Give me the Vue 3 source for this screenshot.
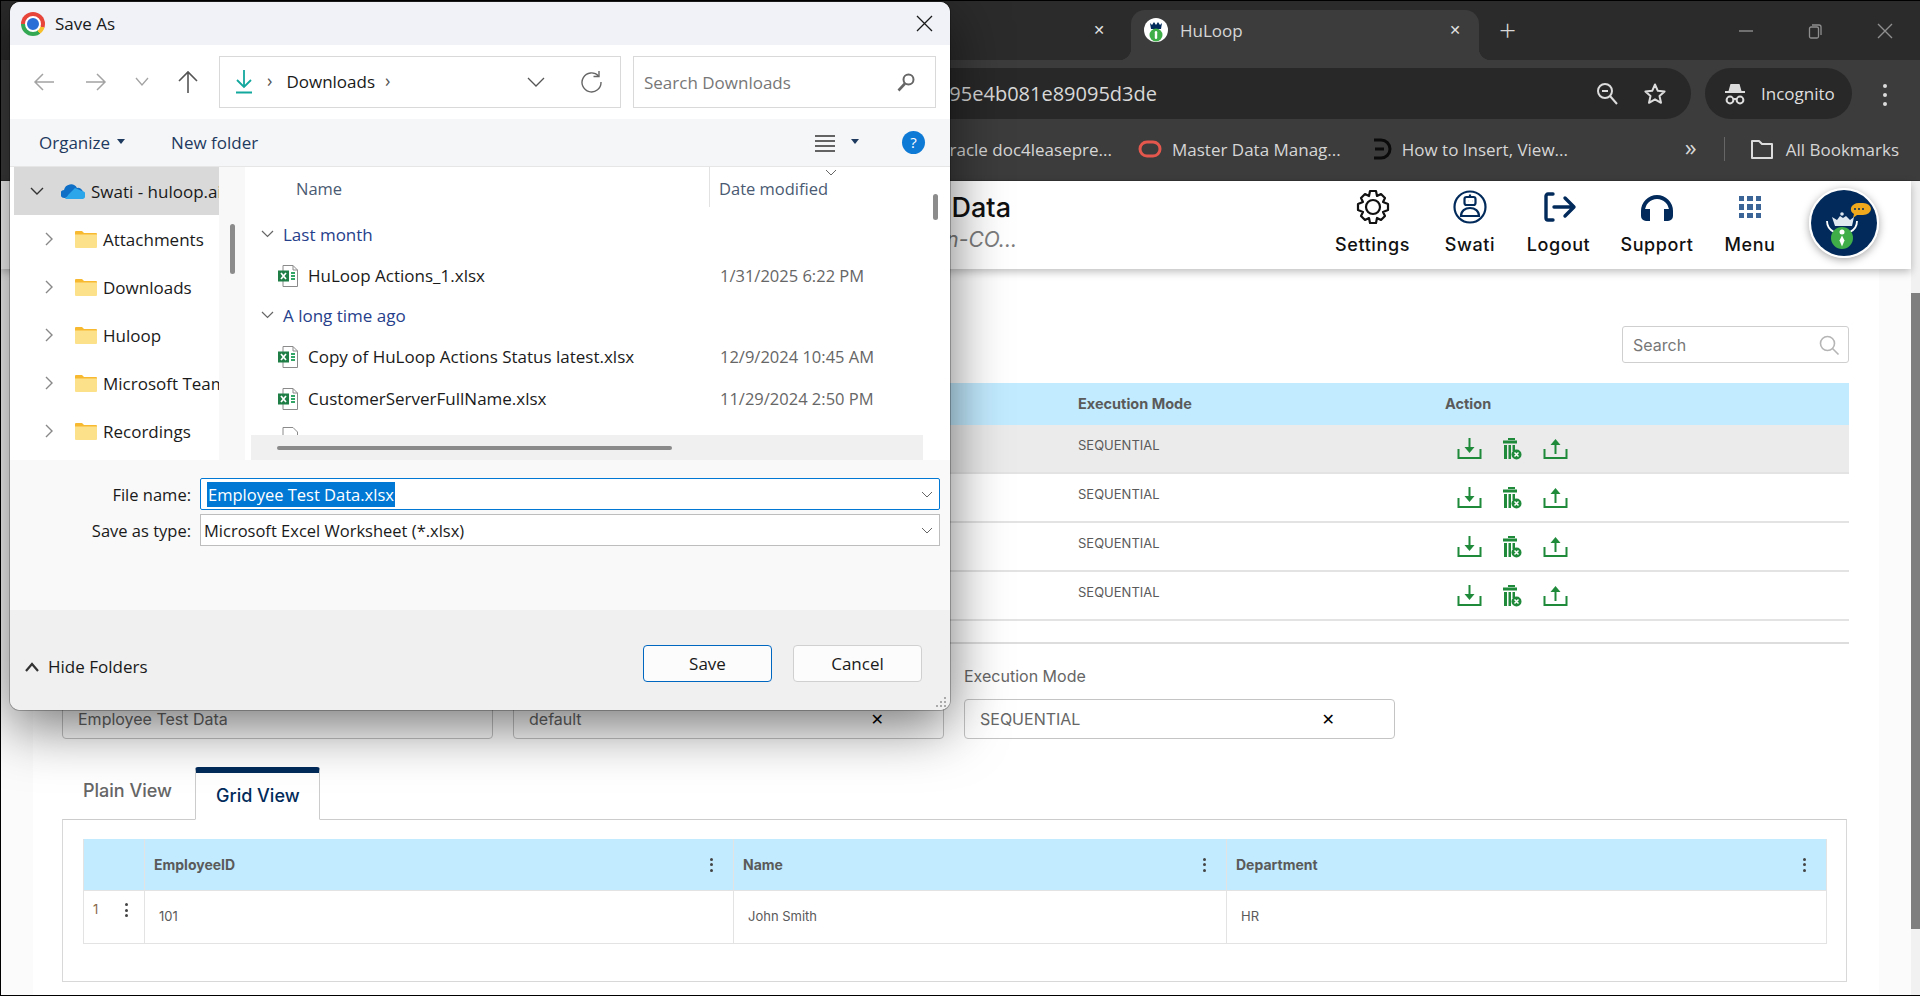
<template>
  <div class="screen">
    <!-- browser chrome -->
    <div class="tabstrip">
      <div class="tab-other"><span class="tab-x">✕</span></div>
      <div class="tab-active">
        <svg class="favicon" viewBox="0 0 24 24">
          <circle cx="12" cy="12" r="12" fill="#fff" />
          <path d="M6 5l2 2 2-3 2 3 2-3 2 3 2-2-1 6H7z" fill="#022b5b" />
          <circle cx="12" cy="17" r="6.5" fill="#3fae49" />
          <rect x="10.8" y="13" width="2.4" height="8" rx="1.2" fill="#fff" />
        </svg>
        <span class="tab-title">HuLoop</span>
        <span class="tab-x tab-x-active">✕</span>
      </div>
      <span class="tab-plus">+</span>
      <div class="win-controls">
        <svg width="16" height="16" viewBox="0 0 16 16"><path d="M1 8h14" stroke="#8f8f8f" stroke-width="1.4" /></svg>
        <svg width="16" height="16" viewBox="0 0 16 16" fill="none" stroke="#8f8f8f" stroke-width="1.3"><rect x="2.5" y="4" width="9" height="11" rx="1.5" /><path d="M5 2h7a2 2 0 0 1 2 2v8" /></svg>
        <svg width="18" height="18" viewBox="0 0 18 18"><path d="M2 2l14 14M16 2L2 16" stroke="#8f8f8f" stroke-width="1.4" /></svg>
      </div>
    </div>
    <div class="toolbar">
      <div class="addressbar">
        <span class="url">95e4b081e89095d3de</span>
        <svg class="addr-icon" width="24" height="26" viewBox="0 0 24 26" fill="none" stroke="#dcdcdc" stroke-width="2"><circle cx="10" cy="10" r="7" /><path d="M15 15l7 8M7 10h6" /></svg>
        <svg class="addr-icon star" width="24" height="24" viewBox="0 0 24 24" fill="none" stroke="#dcdcdc" stroke-width="2" stroke-linejoin="round"><path d="M12 2.5l2.8 6.3 6.8.7-5.1 4.500 1.500 6.800-6-3.500-6 3.500 1.500-6.800-5.100-4.500 6.800-.7z" /></svg>
      </div>
      <div class="incognito">
        <svg width="24" height="24" viewBox="0 0 24 24" fill="#dcdcdc"><path d="M7.5 2h9l2 7H22v2H2V9h3.500z" /><circle cx="7" cy="18" r="3.400" fill="none" stroke="#dcdcdc" stroke-width="2" /><circle cx="17" cy="18" r="3.400" fill="none" stroke="#dcdcdc" stroke-width="2" /><path d="M10 17h4" stroke="#dcdcdc" stroke-width="2" /></svg>
        <span>Incognito</span>
      </div>
      <div class="kebab-light"><i></i><i></i><i></i></div>
    </div>
    <div class="bookmarks">
      <span class="bm bm-first">racle doc4leasepre...</span>
      <svg class="bm-icon" width="24" height="20" viewBox="0 0 24 20"><rect x="2" y="3" width="20" height="14" rx="7" fill="none" stroke="#e4574c" stroke-width="3" /></svg>
      <span class="bm">Master Data Manag...</span>
      <svg class="bm-icon bm-icon-d" width="20" height="24" viewBox="0 0 20 24" fill="none" stroke="#0b0b0b" stroke-width="3"><path d="M2 3h7a9 9 0 0 1 0 18H2M3 12h9" /></svg>
      <span class="bm">How to Insert, View...</span>
      <span class="bm-more">»</span>
      <span class="bm-sep"></span>
      <svg width="24" height="22" viewBox="0 0 24 22" fill="none" stroke="#dcdcdc" stroke-width="2" stroke-linejoin="round"><path d="M2 3h7l3 3h10v14H2z" /></svg>
      <span class="bm bm-all">All Bookmarks</span>
    </div>

    <!-- page behind the dialog -->
    <div class="viewport">
      <div class="content">
        <header class="app-header">
          <div class="page-title">
            <div class="title-main">Data</div>
            <div class="title-sub">n-CO...</div>
          </div>
          <div class="nav-items">
            <div class="nav-item">
              <svg width="36" height="36" viewBox="0 0 36 36" fill="none" stroke="#111" stroke-width="2.200" stroke-linejoin="round"><path d="M15 2h6l1 5 4-2 4 4-2 4 5 2v6l-5 2 2 4-4 4-4-2-1 5h-6l-1-5-4 2-4-4 2-4-5-2v-6l5-2-2-4 4-4 4 2z" /><circle cx="18" cy="18" r="7" /></svg>
              <span>Settings</span>
            </div>
            <div class="nav-item">
              <svg width="36" height="36" viewBox="0 0 36 36" fill="none" stroke="#022b5b" stroke-width="2.200"><circle cx="18" cy="18" r="15.500" /><rect x="12.500" y="8" width="11" height="8" rx="2" /><path d="M18 5.500V8M16 12h.1M20 12h.1" /><path d="M9 27c0-5 4-8 9-8s9 3 9 8z" /></svg>
              <span>Swati</span>
            </div>
            <div class="nav-item">
              <svg width="36" height="36" viewBox="0 0 36 36" fill="none" stroke="#022b5b" stroke-width="3.400" stroke-linecap="round" stroke-linejoin="round"><path d="M12 5H7a2 2 0 0 0-2 2v22a2 2 0 0 0 2 2h5" /><path d="M13 18h19M24 9l9 9-9 9" /></svg>
              <span>Logout</span>
            </div>
            <div class="nav-item">
              <svg width="36" height="36" viewBox="0 0 36 36"><path d="M2 22a16 16 0 0 1 32 0v1h-4v-1a12 12 0 0 0-24 0v1H2z" fill="#022b5b" /><path d="M2 23a5 5 0 0 1 5-3h4v12H7a5 5 0 0 1-5-5zM34 23a5 5 0 0 0-5-3h-4v12h4a5 5 0 0 0 5-5z" fill="#022b5b" /></svg>
              <span>Support</span>
            </div>
            <div class="nav-item">
              <div class="grid-icon"><i v-for="n in 9" :key="n"></i></div>
              <span>Menu</span>
            </div>
            <div class="avatar">
              <svg width="66" height="66" viewBox="0 0 66 66">
                <circle cx="33" cy="33" r="33" fill="#022b5b" />
                <path d="M40 18a8 6 0 0 1 8-5h4a8 6 0 0 1 0 12h-6l-4 3 1-4a7 6 0 0 1-3-6z" fill="#f0a91d" />
                <g fill="#022b5b"><circle cx="44" cy="19" r="1" /><circle cx="48" cy="19" r="1" /><circle cx="52" cy="19" r="1" /></g>
                <path d="M21 27l5 3 3-4 3 2 3-2 4 4 4-3-2 9H24z" fill="#dfe7f1" />
                <circle cx="31" cy="24" r="1.800" fill="#dfe7f1" />
                <path d="M16 31c0 6 3 9 7 11M46 31c0 6-3 9-7 11" fill="none" stroke="#fff" stroke-width="1.800" />
                <circle cx="31" cy="48" r="11" fill="#3fae49" />
                <circle cx="31" cy="42" r="2.500" fill="#fff" />
                <path d="M31 45.500l2.500 5-2.500 6-2.500-6z" fill="#fff" />
              </svg>
            </div>
          </div>
        </header>

        <main class="main">
          <div class="search-row">
            <div class="page-search">
              <span>Search</span>
              <svg width="22" height="22" viewBox="0 0 22 22" fill="none" stroke="#b5b5b5" stroke-width="1.600"><circle cx="9.500" cy="9.500" r="7" /><path d="M14.500 14.500l6 6" /></svg>
            </div>
          </div>

          <div class="list-table">
            <div class="list-row list-head">
              <div></div>
              <div>Execution Mode</div>
              <div>Action</div>
            </div>
            <div v-for="n in 4" :key="n" class="list-row" :class="{ 'is-hover': n === 1 }">
              <div></div>
              <div>SEQUENTIAL</div>
              <div class="actions">
                <svg width="25" height="22" viewBox="0 0 25 22" fill="none" stroke="#1f8a3a" stroke-width="2"><path d="M1.500 11v9h22v-9" /><path d="M12.500 0v11" /><path d="M7.500 9h10l-5 6z" fill="#1f8a3a" stroke="none" /></svg>
                <svg width="19" height="22" viewBox="0 0 19 22" fill="#1f8a3a"><rect x="5" y="0" width="7" height="2" /><rect x="0" y="2.500" width="14" height="3" /><rect x="1" y="7" width="3" height="14" /><rect x="5.500" y="7" width="2.500" height="14" /><rect x="9.500" y="7" width="2.500" height="6" /><circle cx="13.500" cy="16.500" r="5" /><path d="M11.500 14.500l4 4M15.500 14.500l-4 4" stroke="#fff" stroke-width="1.500" /></svg>
                <svg width="25" height="22" viewBox="0 0 25 22" fill="none" stroke="#1f8a3a" stroke-width="2"><path d="M1.500 11v9h22v-9" /><path d="M12.500 16V4" /><path d="M7.500 7h10l-5-6z" fill="#1f8a3a" stroke="none" /></svg>
              </div>
            </div>
          </div>

          <hr class="divider" />

          <div class="fields">
            <div class="field">
              <label>&nbsp;</label>
              <div class="input">Employee Test Data</div>
            </div>
            <div class="field">
              <label>&nbsp;</label>
              <div class="input">default<b class="clear">✕</b></div>
            </div>
            <div class="field">
              <label>Execution Mode</label>
              <div class="input">SEQUENTIAL<b class="clear">✕</b></div>
            </div>
          </div>

          <div class="view-tabs">
            <span class="view-tab">Plain View</span>
            <span class="view-tab is-active">Grid View</span>
          </div>
          <div class="grid-box">
            <div class="grid-table">
              <div class="grid-head">
                <div class="cell"></div>
                <div v-for="col in columns" :key="col" class="cell">
                  {{ col }}
                  <span class="dots"><i></i><i></i><i></i></span>
                </div>
              </div>
              <div class="grid-body">
                <div class="cell row-no">1<span class="dots"><i></i><i></i><i></i></span></div>
                <div class="cell">101</div>
                <div class="cell">John Smith</div>
                <div class="cell">HR</div>
              </div>
            </div>
          </div>
        </main>
      </div>
      <div class="scrollbar"><div class="thumb"></div></div>
    </div>

    <!-- Save As dialog -->
    <div class="dialog">
      <div class="dlg-title">
        <div class="chrome-logo"><i></i></div>
        <span>Save As</span>
        <svg class="dlg-close" width="17" height="17" viewBox="0 0 17 17"><path d="M1 1l15 15M16 1L1 16" stroke="#1a1a1a" stroke-width="1.300" /></svg>
      </div>

      <div class="dlg-nav">
        <svg class="nav-btn" width="22" height="22" viewBox="0 0 22 22" fill="none" stroke="#a3a3a3" stroke-width="1.500"><path d="M21 11H2M10 3l-8 8 8 8" /></svg>
        <svg class="nav-btn" width="22" height="22" viewBox="0 0 22 22" fill="none" stroke="#a3a3a3" stroke-width="1.500"><path d="M1 11h19M12 3l8 8-8 8" /></svg>
        <svg class="nav-btn" width="14" height="10" viewBox="0 0 14 10" fill="none" stroke="#a3a3a3" stroke-width="1.300"><path d="M1 1l6 7 6-7" /></svg>
        <svg class="nav-btn" width="22" height="24" viewBox="0 0 22 24" fill="none" stroke="#555" stroke-width="1.600"><path d="M11 23V2M2 11l9-9 9 9" /></svg>
        <div class="crumb">
          <svg width="18" height="24" viewBox="0 0 18 24" fill="none" stroke="#13a89e" stroke-width="1.800"><path d="M9 0v17M2 10l7 7 7-7M1 22.500h16" /></svg>
          <span class="crumb-sep">›</span>
          <span class="crumb-text">Downloads</span>
          <span class="crumb-sep">›</span>
          <svg class="crumb-chev" width="18" height="10" viewBox="0 0 18 10" fill="none" stroke="#555" stroke-width="1.300"><path d="M1 1l8 8 8-8" /></svg>
          <svg class="crumb-ref" width="22" height="22" viewBox="0 0 22 22" fill="none" stroke="#666" stroke-width="1.400"><path d="M17.500 5a9.500 9.500 0 1 0 2.500 6" /><path d="M18 0v5.500h-5.500" /></svg>
        </div>
        <div class="dlg-search">
          <span>Search Downloads</span>
          <svg width="20" height="20" viewBox="0 0 20 20" fill="none" stroke="#666" stroke-width="2"><circle cx="12.500" cy="7.500" r="5" /><path d="M9 11.500l-6.500 7" stroke-width="2.600" /></svg>
        </div>
      </div>

      <div class="dlg-cmd">
        <span class="cmd-text">Organize</span>
        <span class="caret"></span>
        <span class="cmd-text cmd-new">New folder</span>
        <svg class="view-icon" width="20" height="18" viewBox="0 0 20 18" stroke="#333" stroke-width="1.300"><path d="M0 2h20M0 7h20M0 12h20M0 17h20" /></svg>
        <span class="caret caret-view"></span>
        <span class="help">?</span>
      </div>

      <div class="dlg-body">
        <div class="tree">
          <div class="tree-row is-selected">
            <svg class="tree-chev" width="14" height="9" viewBox="0 0 14 9" fill="none" stroke="#333" stroke-width="1.400"><path d="M1 1l6 6 6-6" /></svg>
            <svg class="cloud" width="24" height="16" viewBox="0 0 24 16"><path d="M4 15a4 4 0 0 1-1-8 7 7 0 0 1 13-2 5 5 0 0 1 6 4z" fill="#0f6fc6" /><path d="M4 16h16a4 4 0 0 0 1-8l-7-3-6 6z" fill="#2ba6ea" /></svg>
            <span class="tree-label">Swati - huloop.ai</span>
          </div>
          <div v-for="f in folders" :key="f" class="tree-row">
            <svg class="tree-arrow" width="9" height="14" viewBox="0 0 9 14" fill="none" stroke="#888" stroke-width="1.400"><path d="M1 1l6 6-6 6" /></svg>
            <svg class="folder" width="22" height="17" viewBox="0 0 22 17"><path d="M0 1a1 1 0 0 1 1-1h6l2 2h12a1 1 0 0 1 1 1v2H0z" fill="#f7b92f" /><path d="M0 3.500h22V16a1 1 0 0 1-1 1H1a1 1 0 0 1-1-1z" fill="#fde18a" /></svg>
            <span class="tree-label">{{ f }}</span>
          </div>
        </div>
        <div class="tree-scroll"><div class="tree-thumb"></div></div>
        <div class="files">
          <div class="files-list">
            <div class="files-head">
              <span class="col-name">Name</span>
              <span class="col-date">Date modified</span>
              <svg class="sort-chev" width="12" height="7" viewBox="0 0 12 7" fill="none" stroke="#666"><path d="M1 1l5 5 5-5" /></svg>
            </div>
            <template v-for="item in fileRows" :key="item.name">
              <div v-if="item.group" class="group-row">
                <svg width="13" height="8" viewBox="0 0 13 8" fill="none" stroke="#666" stroke-width="1.200"><path d="M1 1l5.500 5.500L12 1" /></svg>
                <span>{{ item.name }}</span>
              </div>
              <div v-else class="file-row">
                <svg class="xl" width="20" height="22" viewBox="0 0 20 22">
                  <path d="M5 .5h10l4.500 4.500v16.500H5z" fill="#fff" stroke="#8a8a8a" />
                  <path d="M15 .5V5h4.500" fill="none" stroke="#8a8a8a" />
                  <rect x="0" y="5.500" width="11" height="11" fill="#1e7e45" />
                  <path d="M3 8l5 6M8 8l-5 6" stroke="#fff" stroke-width="1.700" />
                  <path d="M13 8h4M13 11h4M13 14h4" stroke="#33a567" stroke-width="1.800" />
                </svg>
                <span class="file-name">{{ item.name }}</span>
                <span class="file-date">{{ item.date }}</span>
              </div>
            </template>
            <div class="file-row file-cut">
              <svg width="20" height="22" viewBox="0 0 20 22"><path d="M5 .5h10l4.500 4.500v16.500H5z" fill="#fff" stroke="#8a8a8a" /></svg>
            </div>
          </div>
          <div class="hscroll"><div class="hthumb"></div></div>
        </div>
        <div class="files-vscroll"><div class="files-thumb"></div></div>
      </div>

      <div class="dlg-form">
        <label>File name:</label>
        <div class="combo is-focus"><span class="selected">Employee Test Data.xlsx</span><svg width="12" height="7" viewBox="0 0 12 7" fill="none" stroke="#666"><path d="M1 1l5 5 5-5" /></svg></div>
        <label>Save as type:</label>
        <div class="combo"><span class="combo-text">Microsoft Excel Worksheet (*.xlsx)</span><svg width="12" height="7" viewBox="0 0 12 7" fill="none" stroke="#666"><path d="M1 1l5 5 5-5" /></svg></div>
      </div>

      <div class="dlg-foot">
        <div class="hide-folders">
          <svg width="14" height="10" viewBox="0 0 14 10" fill="none" stroke="#333" stroke-width="2.200"><path d="M1 9l6-7 6 7" /></svg>
          <span>Hide Folders</span>
        </div>
        <button class="btn btn-save">Save</button>
        <button class="btn">Cancel</button>
        <svg class="grip" width="12" height="12" viewBox="0 0 12 12" fill="#aaa"><rect x="9" y="1" width="2" height="2" /><rect x="5" y="5" width="2" height="2" /><rect x="9" y="5" width="2" height="2" /><rect x="1" y="9" width="2" height="2" /><rect x="5" y="9" width="2" height="2" /><rect x="9" y="9" width="2" height="2" /></svg>
      </div>
    </div>
  </div>
</template>

<script setup>
const columns = ['EmployeeID', 'Name', 'Department']
const folders = ['Attachments', 'Downloads', 'Huloop', 'Microsoft Teams', 'Recordings']
const fileRows = [
  { name: 'Last month', group: true },
  { name: 'HuLoop Actions_1.xlsx', date: '1/31/2025 6:22 PM' },
  { name: 'A long time ago', group: true },
  { name: 'Copy of HuLoop Actions Status latest.xlsx', date: '12/9/2024 10:45 AM' },
  { name: 'CustomerServerFullName.xlsx', date: '11/29/2024 2:50 PM' }
]
</script>

<style>
html, body {
  margin: 0;
  overflow: hidden;
  background: #000;
}
</style>

<style scoped>
.screen {
  position: relative;
  width: 1920px;
  height: 996px;
  box-sizing: border-box;
  padding: 1px 0 1px 1px;
  background: #000;
  overflow: hidden;
  display: flex;
  flex-direction: column;
  font-family: "Open Sans", "Noto Sans", sans-serif;
}

/* chrome */
.tabstrip {
  height: 59px;
  flex: none;
  display: flex;
  align-items: flex-end;
  background: #2b2b2b;
}
.tab-other {
  width: 1130px;
  height: 50px;
  display: flex;
  justify-content: flex-end;
  padding: 0 26px 10px 0;
  box-sizing: border-box;
  align-items: center;
}
.tab-active {
  position: relative;
  width: 348px;
  height: 50px;
  background: #3c3c3c;
  border-radius: 14px 14px 0 0;
  display: flex;
  align-items: center;
  padding: 0 18px 10px 13px;
  box-sizing: border-box;
}
.tab-active::before,
.tab-active::after {
  content: "";
  position: absolute;
  bottom: 0;
  width: 12px;
  height: 12px;
}
.tab-active::before {
  left: -12px;
  background: radial-gradient(circle at 0 0, transparent 12px, #3c3c3c 12.500px);
}
.tab-active::after {
  right: -12px;
  background: radial-gradient(circle at 100% 0, transparent 12px, #3c3c3c 12.500px);
}
.favicon {
  width: 24px;
  height: 24px;
  flex: none;
}
.tab-title {
  margin-left: 12px;
  font-size: 17px;
  color: #d6d6d6;
}
.tab-x {
  color: #e2e2e2;
  font-size: 14px;
  font-weight: 700;
  font-family: "DejaVu Sans", sans-serif;
}
.tab-x-active {
  margin-left: auto;
}
.tab-plus {
  margin: 0 0 12px 20px;
  font-size: 30px;
  line-height: 36px;
  color: #d8d8d8;
  font-weight: 300;
}
.win-controls {
  margin-left: auto;
  align-self: center;
  display: flex;
  align-items: center;
  gap: 53px;
  padding-right: 26px;
}
.toolbar {
  height: 60px;
  flex: none;
  background: #3c3c3c;
  display: flex;
  align-items: flex-start;
  padding-top: 8px;
  box-sizing: border-box;
}
.addressbar {
  margin-left: 60px;
  width: 1630px;
  height: 51px;
  border-radius: 26px;
  background: #282828;
  display: flex;
  align-items: center;
  padding-right: 24px;
  box-sizing: border-box;
}
.url {
  width: 1096px;
  flex: none;
  text-align: right;
  font-size: 20px;
  color: #d8d8d8;
  white-space: nowrap;
  overflow: hidden;
}
.addr-icon {
  margin-left: auto;
}
.addr-icon.star {
  margin-left: 24px;
}
.incognito {
  margin-left: 14px;
  width: 147px;
  height: 51px;
  border-radius: 26px;
  background: #282828;
  display: flex;
  align-items: center;
  gap: 14px;
  padding-left: 18px;
  box-sizing: border-box;
  font-size: 17px;
  color: #dedede;
}
.kebab-light {
  margin: 16px 0 0 31px;
  display: flex;
  flex-direction: column;
  gap: 5px;
}
.kebab-light i {
  width: 4px;
  height: 4px;
  border-radius: 50%;
  background: #dcdcdc;
}
.bookmarks {
  height: 61px;
  flex: none;
  box-sizing: border-box;
  background: #3c3c3c;
  border-bottom: 1px solid #333;
  display: flex;
  align-items: center;
  padding-right: 21px;
  padding-bottom: 2px;
}
.bm {
  font-size: 17px;
  color: #d6d6d6;
  white-space: nowrap;
}
.bm-first {
  width: 1111px;
  flex: none;
  text-align: right;
}
.bm-icon {
  margin: 0 10px 0 26px;
  flex: none;
}
.bm-icon-d {
  margin: 0 10px 0 31px;
}
.bm-more {
  margin-left: auto;
  color: #d6d6d6;
  font-size: 24px;
  line-height: 24px;
  padding-bottom: 4px;
}
.bm-sep {
  width: 1px;
  height: 24px;
  background: #666;
  margin: 0 25px 0 27px;
}
.bm-all {
  margin-left: 12px;
}

/* page */
.viewport {
  flex: 1;
  min-height: 0;
  display: flex;
  background: #fbfbfb;
}
.content {
  flex: 1;
  min-width: 0;
  display: flex;
  flex-direction: column;
}
.scrollbar {
  width: 9px;
  background: #f1f1f1;
}
.thumb {
  margin-top: 112px;
  height: 636px;
  background: #7f7f7f;
}
.app-header {
  position: relative;
  z-index: 2;
  height: 88px;
  flex: none;
  background: #fff;
  box-shadow: 0 3px 8px rgba(0, 0, 0, 0.25);
  display: flex;
  align-items: flex-start;
  font-family: Inter, "Open Sans", sans-serif;
}
.page-title {
  position: absolute;
  left: 790px;
  top: 10px;
  width: 220px;
  text-align: right;
  white-space: nowrap;
}
.title-main {
  font-size: 27px;
  line-height: 34px;
  font-weight: 500;
  color: #111;
}
.title-sub {
  font-size: 21px;
  line-height: 26px;
  margin: 2px -6px 0 0;
  font-style: italic;
  color: #7d7d7d;
}
.nav-items {
  margin-left: auto;
  display: flex;
  align-items: flex-start;
  gap: 32px;
  padding-right: 32px;
  padding-top: 8px;
}
.nav-item {
  display: flex;
  flex-direction: column;
  align-items: center;
  gap: 9px;
  font-size: 18px;
  font-weight: 500;
  letter-spacing: 0.6px;
  color: #111;
  white-space: nowrap;
}
.nav-item:nth-child(1) {
  width: 79px;
}
.nav-item:nth-child(2) {
  width: 52px;
}
.nav-item:nth-child(3) {
  width: 61px;
}
.nav-item:nth-child(4) {
  width: 72px;
}
.nav-item:nth-child(5) {
  width: 50px;
}
.grid-icon {
  width: 36px;
  height: 36px;
  box-sizing: border-box;
  padding: 7px 7px 7px;
  display: grid;
  grid-template-columns: repeat(3, 1fr);
  gap: 3px;
}
.grid-icon i {
  background: #3a6596;
}
.avatar {
  width: 66px;
  height: 66px;
  margin: -1px 0 0 2px;
  border: 2px solid #fff;
  border-radius: 50%;
  box-shadow: 0 2px 8px rgba(0, 0, 0, 0.35);
}
.avatar svg {
  display: block;
}
.main {
  flex: 1;
  min-height: 0;
  margin-left: 32px;
  margin-right: 32px;
  padding: 57px 30px 0 29px;
  background: #fff;
  font-family: Inter, "Open Sans", sans-serif;
  color: #5a5a5a;
}
.search-row {
  display: flex;
  justify-content: flex-end;
}
.page-search {
  width: 227px;
  height: 37px;
  box-sizing: border-box;
  border: 1px solid #cfcfcf;
  border-radius: 3px;
  padding: 0 8px 0 10px;
  display: flex;
  align-items: center;
  justify-content: space-between;
  font-size: 16px;
  color: #777;
}
.list-table {
  margin-top: 20px;
}
.list-row {
  display: grid;
  grid-template-columns: 1006px 367px 1fr;
  height: 49px;
  box-sizing: border-box;
  border-bottom: 2px solid #e3e3e3;
  font-size: 13px;
}
.list-row > div {
  padding: 12px 0 0 10px;
}
.list-head {
  height: 42px;
  border: 0;
  background: #c2ebff;
  font-size: 14.500px;
  font-weight: 700;
  align-items: center;
}
.list-head > div {
  padding: 0 0 2px 10px;
}
.list-row.is-hover {
  background: #ebebeb;
}
.list-row .actions {
  display: flex;
  align-items: flex-start;
  gap: 21px;
  padding: 13px 0 0 22px;
}
.divider {
  border: 0;
  border-top: 2px solid #ddd;
  margin: 21px 0 0;
}
.fields {
  display: flex;
  gap: 20px;
  margin-top: 21px;
  padding-right: 454px;
}
.field {
  flex: 1;
}
.field label {
  display: block;
  font-size: 16px;
  line-height: 22px;
  margin-bottom: 12px;
  color: #666;
}
.input {
  height: 40px;
  box-sizing: border-box;
  border: 1px solid #c4c4c4;
  border-radius: 4px;
  padding-left: 15px;
  display: flex;
  align-items: center;
  font-size: 16px;
  color: #666;
}
.clear {
  margin-left: auto;
  margin-right: 59px;
  font-size: 16px;
  color: #000;
  font-family: "DejaVu Sans", sans-serif;
}
.view-tabs {
  display: flex;
  align-items: flex-end;
  margin-top: 28px;
  height: 53px;
  margin-bottom: -1px;
  position: relative;
  z-index: 1;
}
.view-tab {
  width: 133px;
  height: 47px;
  box-sizing: border-box;
  padding: 0 0 12px 21px;
  display: flex;
  align-items: center;
  font-size: 18px;
  color: #666;
  font-weight: 500;
}
.view-tab.is-active {
  width: 125px;
  height: 53px;
  padding: 0 0 1px 20px;
  border: 1px solid #ccc;
  border-top: 6px solid #022b5b;
  border-bottom: 1px solid #fff;
  border-radius: 3px 3px 0 0;
  background: #fff;
  color: #022b5b;
}
.grid-box {
  height: 163px;
  box-sizing: border-box;
  margin-right: 2px;
  border: 1px solid #d8d8d8;
  border-top-color: #ccc;
  padding: 19px 19px 0 20px;
}
.grid-table {
  border: 1px solid #e3e3e3;
  border-top: 0;
  font-size: 13px;
}
.grid-head,
.grid-body {
  display: grid;
  grid-template-columns: 60px 589px 493px 1fr;
}
.grid-head {
  height: 51px;
  background: #c2ebff;
  font-weight: 700;
  font-size: 14px;
}
.grid-body {
  height: 52px;
  border-top: 1px solid #e3e3e3;
}
.cell {
  position: relative;
  display: flex;
  align-items: center;
  padding-left: 9px;
  border-left: 1px solid #e3e3e3;
}
.cell:first-child {
  border-left: 0;
}
.grid-body .cell {
  padding: 0 0 2px 14px;
}
.grid-body .row-no {
  padding: 0 0 16px 9px;
  color: #8a6a4a;
}
.dots {
  position: absolute;
  right: 20px;
  top: 50%;
  margin-top: -7px;
  display: flex;
  flex-direction: column;
  gap: 2.500px;
}
.dots i {
  width: 3px;
  height: 3px;
  border-radius: 50%;
  background: #444;
}
.row-no .dots {
  right: 16px;
  top: 12px;
  margin: 0;
}

/* dialog */
.dialog {
  position: absolute;
  left: 10px;
  top: 2px;
  width: 940px;
  height: 708px;
  border-radius: 10px;
  overflow: hidden;
  background: #fff;
  box-shadow: 0 16px 56px rgba(0, 0, 0, 0.55), 0 0 0 1px rgba(0, 0, 0, 0.25);
  display: flex;
  flex-direction: column;
  color: #1a1a1a;
  font-size: 17px;
  z-index: 10;
}
.dlg-title {
  height: 43px;
  flex: none;
  background: #f0f2f8;
  display: flex;
  align-items: center;
  padding-left: 11px;
  gap: 10px;
  font-size: 17px;
}
.chrome-logo {
  width: 24px;
  height: 24px;
  border-radius: 50%;
  background: conic-gradient(#e7453a 0 30%, #f6c02d 30% 40%, #34a853 40% 75%, #e7453a 75% 80%, #e7453a 80%);
  display: flex;
  align-items: center;
  justify-content: center;
}
.chrome-logo i {
  width: 12px;
  height: 12px;
  border-radius: 50%;
  border: 2px solid #fff;
  background: #2a6fd6;
}
.dlg-close {
  margin-left: auto;
  margin-right: 17px;
}
.dlg-nav {
  height: 74px;
  flex: none;
  display: flex;
  align-items: center;
  padding-left: 23px;
}
.nav-btn:nth-child(2) {
  margin-left: 30px;
}
.nav-btn:nth-child(3) {
  margin-left: 28px;
}
.nav-btn:nth-child(4) {
  margin-left: 28px;
}
.crumb {
  margin-left: 20px;
  width: 402px;
  height: 52px;
  box-sizing: border-box;
  border: 1px solid #d9d9d9;
  display: flex;
  align-items: center;
  padding-left: 15px;
}
.crumb-sep {
  margin: 0 14px 4px;
  color: #555;
  font-size: 18px;
}
.crumb-text {
  font-size: 17px;
  margin-bottom: 2px;
}
.crumb-sep + .crumb-text + .crumb-sep {
  margin-left: 10px;
}
.crumb-chev {
  margin-left: auto;
}
.crumb-ref {
  margin: 0 17px 0 36px;
}
.dlg-search {
  margin-left: 12px;
  width: 303px;
  height: 52px;
  box-sizing: border-box;
  border: 1px solid #d9d9d9;
  display: flex;
  align-items: center;
  justify-content: space-between;
  padding: 0 19px 0 10px;
  font-size: 17px;
  color: #777;
}
.dlg-cmd {
  height: 48px;
  flex: none;
  background: #f5f6f7;
  border-bottom: 1px solid #e6e6e6;
  box-sizing: border-box;
  display: flex;
  align-items: center;
  padding-left: 29px;
}
.cmd-text {
  font-size: 17px;
  color: #1e3a5f;
}
.caret {
  width: 0;
  height: 0;
  margin: 0 0 2px 7px;
  border: 4px solid transparent;
  border-top: 5px solid #1e3a5f;
  border-bottom: 0;
}
.cmd-new {
  margin-left: 46px;
}
.view-icon {
  margin-left: auto;
}
.caret-view {
  margin-left: 16px;
}
.help {
  margin: 0 25px 0 43px;
  width: 23px;
  height: 23px;
  border-radius: 50%;
  background: #0f7ad6;
  color: #fff;
  font-size: 15px;
  line-height: 23px;
  text-align: center;
}
.dlg-body {
  height: 293px;
  flex: none;
  display: flex;
  background: #fff;
}
.tree {
  width: 209px;
  flex: none;
  padding-left: 4px;
  box-sizing: border-box;
  overflow: hidden;
}
.tree-row {
  height: 48px;
  width: 205px;
  display: flex;
  align-items: center;
  overflow: hidden;
  white-space: nowrap;
  flex: none;
}
.tree-row.is-selected {
  background: #d9d9d9;
}
.tree-chev {
  margin-left: 16px;
  flex: none;
}
.cloud {
  margin-left: 17px;
  flex: none;
}
.tree-arrow {
  margin-left: 31px;
  flex: none;
}
.folder {
  margin-left: 21px;
  flex: none;
}
.tree-label {
  margin-left: 6px;
  font-size: 17px;
}
.tree-scroll {
  width: 30px;
  flex: none;
  background: #f8f8f8;
  border-right: 4px solid #fff;
  box-sizing: border-box;
}
.tree-thumb {
  width: 5px;
  height: 50px;
  margin: 57px 0 0 11px;
  background: #8c8c8c;
  border-radius: 3px;
}
.files {
  width: 674px;
  flex: none;
  display: flex;
  flex-direction: column;
}
.files-list {
  height: 268px;
  overflow: hidden;
}
.files-head {
  position: relative;
  height: 47px;
  font-size: 16.500px;
  color: #4a5a72;
}
.col-name {
  position: absolute;
  left: 47px;
  top: 10px;
}
.col-date {
  position: absolute;
  left: 460px;
  top: 0;
  padding: 10px 0 0 9px;
  height: 40px;
  border-left: 1px solid #e2e2e2;
  box-sizing: border-box;
}
.sort-chev {
  position: absolute;
  left: 576px;
  top: 2px;
}
.group-row {
  height: 40px;
  display: flex;
  align-items: center;
  padding-left: 12px;
  gap: 9px;
  font-size: 17px;
  color: #26408b;
}
.group-row + .file-row {
  height: 41px;
}
.file-row {
  position: relative;
  height: 43px;
  display: flex;
  align-items: center;
  padding: 2px 0 0 29px;
  box-sizing: border-box;
  white-space: nowrap;
}
.xl {
  flex: none;
}
.file-name {
  margin-left: 10px;
  font-size: 17px;
}
.file-date {
  position: absolute;
  left: 471px;
  font-size: 16.500px;
  color: #666;
}
.file-cut {
  align-items: flex-start;
  padding-top: 8px;
}
.hscroll {
  height: 25px;
  background: #f0f0f0;
  margin-left: 2px;
  flex: none;
  padding-top: 11px;
  box-sizing: border-box;
}
.hthumb {
  width: 395px;
  height: 4px;
  margin-left: 26px;
  background: #8a8a8a;
  border-radius: 2px;
}
.files-vscroll {
  flex: 1;
  background: #fff;
}
.files-thumb {
  width: 5px;
  height: 26px;
  margin: 27px 0 0 10px;
  background: #8c8c8c;
  border-radius: 3px;
}
.dlg-form {
  height: 150px;
  flex: none;
  background: #f9f9f9;
  box-sizing: border-box;
  padding: 18px 10px 0 0;
  display: grid;
  grid-template-columns: 181px 1fr;
  column-gap: 9px;
  row-gap: 4px;
  grid-auto-rows: 32px;
  align-items: center;
  font-size: 16.500px;
}
.dlg-form label {
  text-align: right;
}
.combo {
  height: 32px;
  box-sizing: border-box;
  border: 1px solid #bdbdbd;
  background: #fff;
  display: flex;
  align-items: center;
  justify-content: space-between;
  padding: 0 6px 0 3px;
  white-space: nowrap;
}
.combo.is-focus {
  border: 1.500px solid #0078d4;
  border-radius: 2px;
  padding-left: 6px;
}
.selected {
  background: #0078d4;
  color: #fff;
  line-height: 25px;
  padding: 0 1px;
}
.dlg-foot {
  position: relative;
  flex: 1;
  background: #f0f0f0;
  display: flex;
  align-items: flex-start;
  padding: 35px 28px 0 15px;
  gap: 21px;
}
.hide-folders {
  margin-right: auto;
  margin-top: 10px;
  display: flex;
  align-items: center;
  gap: 9px;
}
.btn {
  width: 129px;
  height: 37px;
  box-sizing: border-box;
  border: 1px solid #d0d0d0;
  border-radius: 4px;
  background: #fcfcfc;
  font-family: inherit;
  font-size: 17px;
  color: #1a1a1a;
  padding: 0;
}
.btn-save {
  border: 1.500px solid #0067c0;
}
.grip {
  position: absolute;
  right: 3px;
  bottom: 2px;
}
</style>
